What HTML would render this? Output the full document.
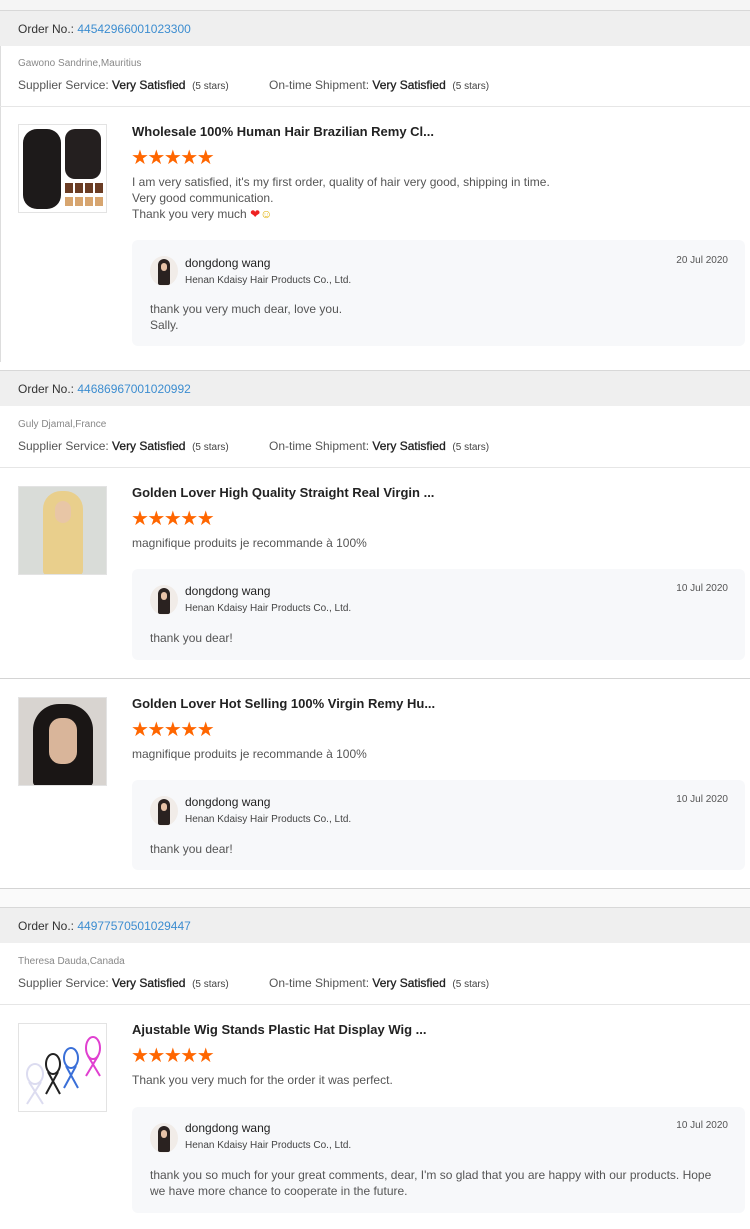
<!DOCTYPE html>
<html><head><meta charset="utf-8"><style>
*{margin:0;padding:0;box-sizing:border-box}
body{width:750px;height:1229px;background:#fff;font-family:"Liberation Sans",Arial,sans-serif;color:#333;position:relative;overflow:hidden}
.a{position:absolute;white-space:nowrap}
.hdr{position:absolute;left:0;width:750px;height:36px;background:#efefef;border-top:1px solid #d8d8d8;font-size:12px;color:#333;padding:11px 0 0 18px}
.hdr span{color:#3c8dd0}
.buyer{font-size:10px;color:#888}
.sup{font-size:12px;color:#555}
.sup b{color:#222;font-weight:normal;-webkit-text-stroke:.3px #222}
.sup small{font-size:10px;color:#444}
.line{position:absolute;left:0;width:750px;height:1px;background:#e6e6e6}
.img{position:absolute;left:18px;width:89px;height:89px;border:1px solid #e3e3e3;background:#fff;overflow:hidden}
.title{font-size:13px;color:#222;font-weight:bold;letter-spacing:0}
.stars{font-size:20px;color:#f60;letter-spacing:-1.5px;line-height:20px}
.txt{font-size:12px;color:#555;line-height:16px}
.box{position:absolute;left:132px;width:613px;background:#f7f8fa;border-radius:6px}
.av{position:absolute;left:18px;width:28px;height:30px;border-radius:50%;background:#f1ece8;overflow:hidden}
.av i{position:absolute;left:8px;top:3px;width:12px;height:26px;background:#2a2220;border-radius:6px 6px 2px 2px}
.av em{position:absolute;left:11px;top:7px;width:6px;height:8px;background:#e7c3a8;border-radius:3px}
.nm{font-size:12px;color:#222}
.co{font-size:10px;color:#444}
.dt{font-size:10px;color:#555;right:17px}
</style></head><body>
<div style="position:absolute;left:0;top:0;width:750px;height:10px;background:#f5f5f5"></div>
<div style="position:absolute;left:0;top:10px;width:1px;height:352px;background:#ddd"></div>

<div class="hdr" style="top:10px">Order No.: <span>44542966001023300</span></div>
<div class="a buyer" style="left:18px;top:58px">Gawono Sandrine,Mauritius</div>
<div class="a sup" style="left:18px;top:78px">Supplier Service: <b>Very Satisfied</b> &nbsp;<small>(5 stars)</small></div>
<div class="a sup" style="left:269px;top:78px">On-time Shipment: <b>Very Satisfied</b> &nbsp;<small>(5 stars)</small></div>
<div class="line" style="top:106px"></div>
<div class="img" style="top:124px"><div style="position:absolute;left:4px;top:4px;width:38px;height:80px;background:#1d1a1a;border-radius:14px"></div><div style="position:absolute;left:46px;top:4px;width:36px;height:50px;background:#241f1f;border-radius:10px"></div><div style="position:absolute;left:46px;top:58px;width:38px;height:10px;background:repeating-linear-gradient(90deg,#6b3d25 0 8px,#fff 8px 10px)"></div><div style="position:absolute;left:46px;top:72px;width:38px;height:9px;background:repeating-linear-gradient(90deg,#d7a56f 0 8px,#fff 8px 10px)"></div></div>
<div class="a title" style="left:132px;top:124px">Wholesale 100% Human Hair Brazilian Remy Cl...</div>
<div class="a stars" style="left:131px;top:148px">★★★★★</div>
<div class="a txt" style="left:132px;top:174px">I am very satisfied, it's my first order, quality of hair very good, shipping in time.<br>Very good communication.<br>Thank you very much <span style="color:#e22">❤</span><span style="color:#e0b000">☺</span></div>
<div class="box" style="top:240px;height:106px">
<div class="av" style="top:16px"><i></i><em></em></div>
<div class="a nm" style="left:53px;top:16px">dongdong wang</div>
<div class="a co" style="left:53px;top:35px">Henan Kdaisy Hair Products Co., Ltd.</div>
<div class="a dt" style="top:15px">20 Jul 2020</div>
<div class="a txt" style="left:18px;top:61px">thank you very much dear, love you.<br>Sally.</div>
</div>

<div class="hdr" style="top:370px">Order No.: <span>44686967001020992</span></div>
<div class="a buyer" style="left:18px;top:419px">Guly Djamal,France</div>
<div class="a sup" style="left:18px;top:439px">Supplier Service: <b>Very Satisfied</b> &nbsp;<small>(5 stars)</small></div>
<div class="a sup" style="left:269px;top:439px">On-time Shipment: <b>Very Satisfied</b> &nbsp;<small>(5 stars)</small></div>
<div class="line" style="top:467px"></div>
<div class="img" style="top:486px;background:#d9dcd8"><div style="position:absolute;left:24px;top:4px;width:40px;height:84px;background:#e9cf8c;border-radius:18px 18px 4px 4px"></div><div style="position:absolute;left:36px;top:14px;width:16px;height:22px;background:#e8c6a6;border-radius:8px"></div></div>
<div class="a title" style="left:132px;top:485px">Golden Lover High Quality Straight Real Virgin ...</div>
<div class="a stars" style="left:131px;top:509px">★★★★★</div>
<div class="a txt" style="left:132px;top:535px">magnifique produits je recommande à 100%</div>
<div class="box" style="top:569px;height:91px">
<div class="av" style="top:16px"><i></i><em></em></div>
<div class="a nm" style="left:53px;top:15px">dongdong wang</div>
<div class="a co" style="left:53px;top:34px">Henan Kdaisy Hair Products Co., Ltd.</div>
<div class="a dt" style="top:14px">10 Jul 2020</div>
<div class="a txt" style="left:18px;top:61px">thank you dear!</div>
</div>
<div class="line" style="top:678px;background:#d4d4d4"></div>
<div class="img" style="top:697px;background:#d8d4d0"><div style="position:absolute;left:14px;top:6px;width:60px;height:82px;background:#1a1615;border-radius:26px 26px 4px 4px"></div><div style="position:absolute;left:30px;top:20px;width:28px;height:46px;background:#d9b59a;border-radius:12px"></div></div>
<div class="a title" style="left:132px;top:696px">Golden Lover Hot Selling 100% Virgin Remy Hu...</div>
<div class="a stars" style="left:131px;top:720px">★★★★★</div>
<div class="a txt" style="left:132px;top:746px">magnifique produits je recommande à 100%</div>
<div class="box" style="top:780px;height:90px">
<div class="av" style="top:16px"><i></i><em></em></div>
<div class="a nm" style="left:53px;top:15px">dongdong wang</div>
<div class="a co" style="left:53px;top:34px">Henan Kdaisy Hair Products Co., Ltd.</div>
<div class="a dt" style="top:14px">10 Jul 2020</div>
<div class="a txt" style="left:18px;top:61px">thank you dear!</div>
</div>
<div style="position:absolute;left:0;top:888px;width:750px;height:19px;background:#fafafa;border-top:1px solid #d4d4d4"></div>

<div class="hdr" style="top:907px">Order No.: <span>44977570501029447</span></div>
<div class="a buyer" style="left:18px;top:956px">Theresa Dauda,Canada</div>
<div class="a sup" style="left:18px;top:976px">Supplier Service: <b>Very Satisfied</b> &nbsp;<small>(5 stars)</small></div>
<div class="a sup" style="left:269px;top:976px">On-time Shipment: <b>Very Satisfied</b> &nbsp;<small>(5 stars)</small></div>
<div class="line" style="top:1004px"></div>
<div class="img" style="top:1023px"><svg width="89" height="89" viewBox="0 0 89 89" fill="none" stroke-width="2"><g stroke="#dcdcf0"><ellipse cx="16" cy="50" rx="8" ry="10"/><path d="M10 58 L24 80 M22 58 L8 80"/></g><g stroke="#222"><ellipse cx="34" cy="40" rx="7" ry="10"/><path d="M29 48 L41 70 M39 48 L27 70"/></g><g stroke="#3a6fd8"><ellipse cx="52" cy="34" rx="7" ry="10"/><path d="M47 42 L59 64 M57 42 L45 64"/></g><g stroke="#e040d0"><ellipse cx="74" cy="24" rx="7" ry="11"/><path d="M69 32 L81 52 M79 32 L67 52"/></g></svg></div>
<div class="a title" style="left:132px;top:1022px">Ajustable Wig Stands Plastic Hat Display Wig ...</div>
<div class="a stars" style="left:131px;top:1046px">★★★★★</div>
<div class="a txt" style="left:132px;top:1072px">Thank you very much for the order it was perfect.</div>
<div class="box" style="top:1107px;height:106px">
<div class="av" style="top:16px"><i></i><em></em></div>
<div class="a nm" style="left:53px;top:14px">dongdong wang</div>
<div class="a co" style="left:53px;top:33px">Henan Kdaisy Hair Products Co., Ltd.</div>
<div class="a dt" style="top:13px">10 Jul 2020</div>
<div class="a txt" style="left:18px;top:60px">thank you so much for your great comments, dear, I'm so glad that you are happy with our products. Hope<br>we have more chance to cooperate in the future.</div>
</div>
</body></html>
